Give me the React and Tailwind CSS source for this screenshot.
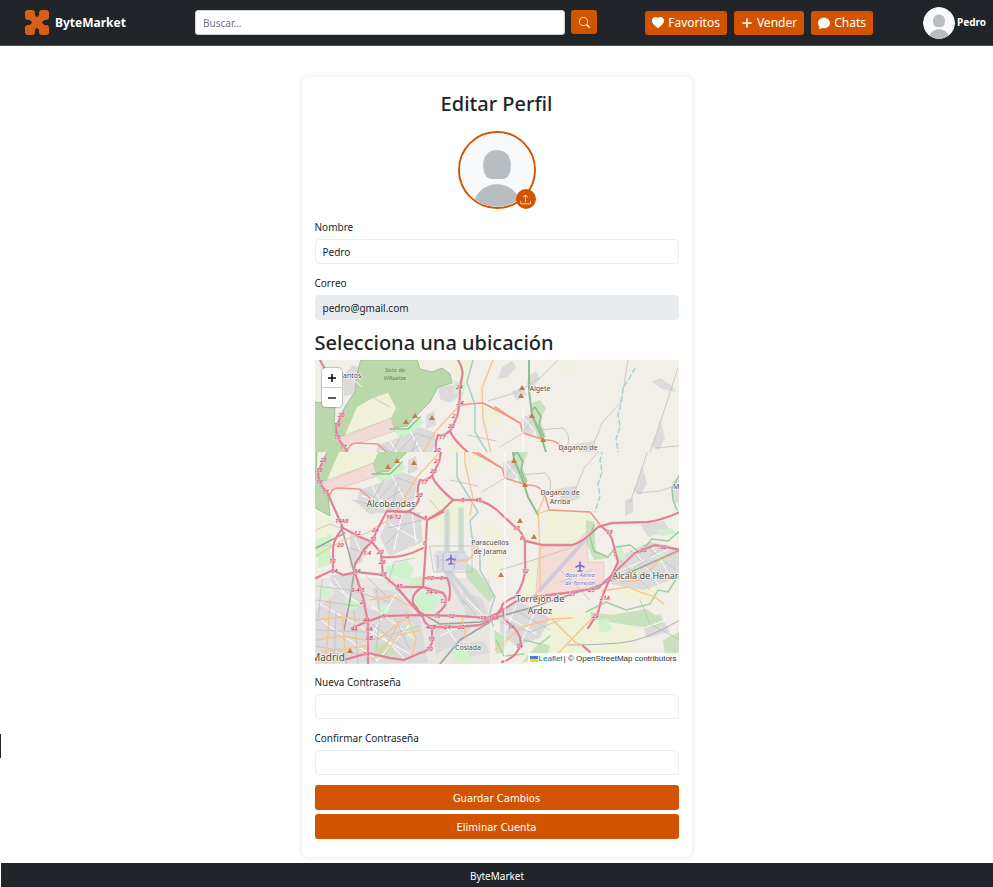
import React from "react";
import { BsChatFill, BsHeartFill, BsPlusLg, BsSearch, BsUpload } from "react-icons/bs";

function Logo() {
  return (
    <svg viewBox="0 0 24 25" className="h-[25px] w-6" aria-hidden="true">
      <g fill="#d95f16">
        <rect width="10" height="10" rx="3" />
        <rect x="14" width="10" height="10" rx="3" />
        <rect y="15" width="10" height="10" rx="3" />
        <rect x="14" y="15" width="10" height="10" rx="3" />
      </g>
      <path d="M5.500 5.500l13 14M18.500 5.500l-13 14" stroke="#d95f16" strokeWidth="7" />
    </svg>
  );
}

function Avatar({ className }) {
  return (
    <svg viewBox="0 0 78 78" className={className} role="img" aria-label="Foto de perfil">
      <defs>
        <clipPath id="face">
          <circle cx="39" cy="39" r="39" />
        </clipPath>
      </defs>
      <g clipPath="url(#face)">
        <rect width="78" height="78" fill="#f8f9fb" />
        <path d="M39 18c8.500 0 14.500 6 14.500 15 0 10.500-3 15.500-9.500 15.500H34c-6.500 0-9.500-5-9.500-15.500 0-9 6-15 14.500-15z" fill="#b8bdc1" />
        <path d="M39 54c10 0 19 5.500 23 15v9H16v-9c4-9.500 13-15 23-15z" fill="#b8bdc1" />
      </g>
    </svg>
  );
}

const urban = [
  "M325 420l10-10 12 5 2 12-10 12-13 2z",
  "M420 432l16-2 4 12-8 6-10-4z",
  "M360 490l22-8 20-10 16 6-4 22-18 12-26 2-14-12z",
  "M408 460l8-4 2 14-10 4z",
  "M503 463l14-6 4 14-8 10-10-4z",
  "M484 412l10-6 4 6-8 10-10 2z",
  "M494 436l12-4 2 8-10 6z",
  "M510 422l8-6 4 8-6 8-7-2z",
  "M634 427l8-4 12 8 4 6-14-3z",
  "M642 465l-3 14-6 12 8 4 6-12z",
  "M556 489l20-3 4 12-16 6z",
  "M625 500l8-2v14l-8 4z",
  "M390 514l30-2 3 30-34 14-9-20z",
  "M350 530l20 12-8 20-12 6z",
  "M316 610l40-34 14 34 50 6 8 47H316z",
  "M330 575l22-1 2 24-16 6z",
  "M372 588l24 4 18 22-34 2z",
  "M432 624l42-2-12 20-26 12z",
  "M462 592l20 6 6 16-22 2z",
  "M500 610l20-8 30 16-10 20-24 8-16-14z",
  "M620 556l30-14 30 6v28l-36 14-34-6z",
  "M640 524l24-3 6 10-22 6z",
  "M642 620l18-6 10 18-24 6z",
  "M460 643l24-2 6 12-26 4z",
  "M672 482l8-4v26l-6-2z",
];

const fields = [
  "M432 484l16 16 18 0-2 30-24 2-12-12z",
  "M430 405h26l-6 26-8-2z",
  "M548 512h36l16 14-16 18-42 0z",
  "M528 560l12-2-4 40-22 10 10-24z",
  "M552 610l50 0 38 6-8 40-60 6-30-24z",
  "M544 618l30 24-8 20-44 2z",
  "M640 560l36 4-20 40-36-4z",
  "M543 411l14-2-2 9-10 2z",
  "M484 522l20 10 0 40-14 6z",
  "M414 540l12-4v20l-12 4z",
  "M466 456l14-6 4 20-14 4z",
  "M318 516l14 2 4 20-20 10z",
  "M398 536l24-8 2 12-22 10z",
];

const woods = [
  "M514 448l8-3 6 8-6 12 6 16-8 2-6-16z",
  "M590 612l22 3 34-6 16 10-4 10-44-6-22-4z",
  "M540 642l10 4-4 14-24 2z",
  "M663 640l16-8v24l-14 2z",
  "M494 630l14 8-4 14-8 2z",
  "M372 644l16-2 10 12-22 4z",
  "M463 560l14 10 18 26-6 6-22-24z",
  "M586 520l8 2 2 30 14 6-16 2-8-18z",
];

const parks = [
  "M386 566l20-6 8 8-4 12-22-4z",
  "M410 578l12-2v9h-12z",
  "M418 594l12-4 10 12-12 12-14-8z",
  "M316 540l16-6-2 18-14 6z",
  "M318 556l12-4 2 12-14 4z",
  "M344 598l12 2 2 8-10 2z",
  "M406 626l8-2 1 12-8 2z",
  "M452 650l14-3 6 14h-18z",
  "M376 476l12-4 14-9 4 5-14 10-10 6z",
  "M656 530l16-2 6 6-18 2z",
  "M598 620l10-2 4 12-12 3z",
  "M612 550l10-3 4 12-10 3z",
  "M436 425l12 4-3 12-10-4z",
  "M630 566l8-2 3 8-8 3z",
  "M656 556l8-2 2 8-8 2z",
  "M380 604l10 2-2 8-9-2z",
  "M318 590l10-3 2 8-11 3z",
];

const motorways = [
  "M440 405Q446 415 444 422L442 433Q442 450 439 462L432 476Q424 482 420 480Q416 490 419 499Q416 508 407 512L387 511L377 530L372 542Q362 550 360 557Q352 566 355 573L363 597L368 623V664",
  "M432 476Q436 486 453 500L477 500Q490 503 500 513L515 527Q523 532 525 542L525 560Q527 580 515 597Q500 603 502 608L505 620Q524 634 520 646T502 662",
  "M453 500L443 510L427 520L425 560L423 587Q411 593 413 603L423 617Q424 624 432 627L432 643Q428 652 420 653L404 660L390 658L368 653L344 660",
  "M387 511L410 512L427 520L443 512",
  "M316 578L333 570L343 575L357 572L383 575L397 587L410 603L423 617",
  "M302 405L310 420M325 457L318 472Q318 484 327 492L335 510L343 528L360 537L372 542L381 553L383 575",
  "M343 528Q332 540 333 553V570",
  "M383 557Q402 559 423 548",
  "M398 587H423L443 593Q452 604 435 615",
  "M425 578H447Q452 588 449 600",
  "M352 628L366 622L383 616L420 615L460 616L487 618L500 612L515 602L532 597L565 593L598 588L615 572L635 553L655 545L680 550",
  "M432 627H460L480 625L500 616",
  "M526 541L542 545H572Q582 543 598 527L612 523L648 522Q662 520 680 512",
  "M602 527Q612 534 613 543L618 562L608 583L602 597L598 613L588 628",
  "M583 646L590 652",
  "M495 618L502 607",
];

const reds = [
  "M439 451Q452 448 465 448L484 458L502 468L505 478L527 485Q540 484 545 495L549 510L590 512L602 527",
  "M329 497Q331 488 339 488L359 489L370 498",
  "M477 452L500 467",
  "M542 597L600 588",
];

const oranges = [
  "M475 405L464 433L465 463L473 498L470 515",
  "M439 453L417 477L405 497L393 517L367 533L343 540L316 556",
  "M538 510L540 550L540 587L534 597",
  "M602 591L628 587L640 592L655 597L664 604",
  "M552 619L575 642L585 647",
  "M495 650L522 627L552 619L572 618",
  "M598 612L568 643L552 660",
  "M545 494L542 503L538 512M548 510L538 514",
  "M316 620L340 617L360 620",
  "M330 600L326 664M342 612L346 664",
  "M316 640L340 636L366 640",
  "M322 652L366 646",
  "M370 600L392 596L410 606",
  "M378 640L400 622L410 616",
  "M385 655L398 635L420 630",
  "M372 660L390 640L400 620",
  "M406 612L416 640L412 654",
  "M462 616L466 640",
  "M450 563L468 560L476 552L472 540",
  "M680 552L660 560L640 580L620 582",
];

const lanes = [
  "M320 604l90 50M318 618l60 42M330 584l30 20M372 606l44 34M376 630l30 30M396 594l-30 50M412 622l-36 40",
  "M440 636l30-14M446 626l14 22M466 598l16 16M506 616l30 18M516 606l-10 24M536 610l-14 30",
  "M622 570l50-22M634 550l24 34M652 546l18 30M644 628l22-8M390 524l28 16M402 514l-8 36M412 512l4 30",
  "M362 496l44 10M372 486l14 24M392 476l14 26M354 536l10 24M334 578l14 20M324 414l20 18M505 462l12 14",
];

const streets = [
  "M316 586L350 590L390 602M316 600L356 606M322 580L318 620M366 576L390 600M376 588L380 612",
  "M316 530L330 524L346 530M352 500L376 506L402 490M360 488L378 500L398 478L414 484M366 512L384 480M390 512L398 484",
  "M372 624L404 648M372 640L420 626M394 616L410 650M380 616L376 650M316 630L366 632M336 612L334 664M354 612L358 664M316 646L366 656",
  "M470 446L500 437L520 424M540 405L520 425M482 492L505 478L516 462M520 475L545 473Q553 480 550 490",
  "M430 500L440 512M450 480L478 486M463 600L480 620M500 622L530 632L560 620M515 610L550 630",
  "M610 405L606 430L602 448L584 468L574 493M660 413L647 453L637 483L630 502M637 493L660 491L674 486",
  "M640 600L650 624L680 640M560 570L590 600M620 560L650 590M630 550L660 580M644 545L676 570M620 578L660 550",
  "M350 440L372 452M500 570L540 558L570 548M592 570L560 582",
  "M430 546h42v26h-38zM436 552h30M440 560h26M388 528l34-8M386 544l20-20M322 546l22-2M350 548l20 6M388 584l6-22 20-4",
];

const roadNumbers = [
  [438, 434, "24"], [439, 450, "24"], [434, 463, "21"], [430, 473, "20"], [421, 484, "17"],
  [416, 497, "20"], [320, 462, "20"], [316, 472, "18"], [316, 484, "18"], [322, 494, "17"],
  [335, 523, "14A8"], [354, 535, "12"], [370, 541, "31"], [377, 554, "20"], [379, 564, "26"],
  [363, 555, "1.4"], [337, 547, "20"], [329, 563, "10"], [331, 573, "84"], [354, 573, "34"],
  [380, 576, "28"], [396, 588, "45"], [351, 592, "3-4-5"], [360, 604, "2"], [363, 622, "44"],
  [366, 631, "6A"], [366, 640, "6B"], [351, 631, "4A"], [363, 656, "14"], [382, 618, "5"],
  [406, 618, "6"], [434, 618, "16"], [448, 618, "12"], [480, 620, "15-16A"], [427, 580, "10"],
  [440, 580, "6"], [426, 594, "74-9"], [440, 603, "12"], [426, 629, "40B"], [444, 629, "24"],
  [458, 629, "20"], [428, 641, "13"], [426, 651, "10"], [386, 519, "16-12"], [424, 520, "5"],
  [372, 532, "24"], [423, 545, "8"], [475, 502, "45"], [461, 502, "5"], [513, 530, "10"],
  [520, 540, "6"], [522, 573, "12"], [569, 596, "21"], [588, 592, "25"], [600, 600, "21A"],
  [592, 618, "29"], [606, 534, "18"], [613, 556, "1"], [640, 552, "30"], [660, 549, "32"],
  [508, 629, "14"], [516, 648, "14"],
];

const peaks = [
  [388, 467], [397, 461], [414, 463], [504, 433], [503, 441], [514, 461], [525, 485],
  [520, 521], [534, 537], [501, 575], [350, 651],
];

function Terrain() {
  return (
    <g id="terrain" strokeLinejoin="round" strokeLinecap="round" fill="none">
      <rect x="290" y="400" width="400" height="270" fill="#f2efe9" stroke="none" />
      <rect x="312" y="578" width="178" height="92" fill="#e9e6e2" />
      {fields.map((d) => <path key={d} d={d} fill="#eff1d8" />)}
      {urban.map((d) => <path key={d} d={d} fill="#dcdada" />)}
      {woods.map((d) => <path key={d} d={d} fill="#c8e1be" />)}
      {parks.map((d) => <path key={d} d={d} fill="#cff2cc" />)}
      <path d="M290 446L317 450L316 476L328 496L330 516L312 506L290 500z" fill="#bad8ac" stroke="#9cc592" />
      <path d="M343 405L399 405L402 414L414 417L424 413L432 419L434 428L420 432L412 447L399 460L389 471L375 473L372 463L324 481L317 480L320 466L328 450L337 437L339 420z" fill="#bad8ac" stroke="#9cc592" />
      <path d="M327 480L339 452L355 443L370 438L378 453L373 463L340 475z" fill="#f1f1d9" />
      <path d="M320 484L332 480L373 463L377 476L344 487L325 491z" fill="#f2dad5" stroke="#e8b8b2" strokeWidth="0.6" />
      <path d="M540 547L574 546L586 532L588 562L604 562L604 580L590 590L536 596z" fill="#f4dcd8" stroke="#efb9b5" strokeWidth="0.6" />
      <path d="M540 590L586 539" stroke="#d3cbdd" strokeWidth="4" />
      <path d="M447 512V552M461 510V552" stroke="#cfe2ca" strokeWidth="6" />
      <path d="M447 512V552M461 510V552" stroke="#d0d2d6" strokeWidth="2" />
      <path d="M434 554l28-4 8 8-6 12-28 2z" fill="#dcdce6" />
      <path d="M450 572L478 606M446 572L464 604" stroke="#d0d5d8" strokeWidth="4" />
      <path d="M438 556v12M443 554v16M456 555l-2 14" stroke="#b5b5ce" />
      {lanes.map((d) => <path key={d} d={d} stroke="#fff" strokeWidth="1" />)}
      <path d="M455 405L449 427L457 450L457 477L469 497L478 512L470 521L472 537L480 552L480 570L495 597L490 612L493 626" stroke="#a7d0c9" strokeWidth="1.500" />
      <path d="M617 413L612 422L605 433L604 445L600 460L602 472L598 484L600 496L595 512" stroke="#9fd0dc" strokeWidth="1.300" strokeDasharray="5 3" />
      <path d="M511 405V435L514 460L522 478L528 497L538 515" stroke="#8fbd90" strokeWidth="2" />
      <path d="M513 456l4-4 6 10-2 8 5 12" stroke="#8fbd90" strokeWidth="1.500" />
      <path d="M680 474l-8 14 1 12 4 10M594 525l-4 12 4 14 14 6 8-10 14-2 10 8 12-14 16 2 12-10" stroke="#9acb9f" strokeWidth="1.500" />
      <path d="M586 612l20-10 20 8 24-6 8-14 10 2 10-16M524 640l16 4 10-8M496 640l8 16 20-2" stroke="#a6d0a2" strokeWidth="1.500" />
      <path d="M372 474l18 0 12-12" stroke="#8dc391" strokeWidth="1.500" />
      {streets.map((d) => <path key={d} d={d} stroke="#c2c0c0" strokeWidth="0.8" />)}
      <path d="M316 548L345 533M341 526Q348 548 354 572L350 600L344 630M396 588L420 612L440 624L480 622L530 608L600 585L640 568L680 550M440 664L460 640L490 622" stroke="#a3a1a1" strokeWidth="1.600" />
      <path d="M568 645Q595 645 620 643T680 620" stroke="#b1afaf" />
      {oranges.map((d) => <path key={d} d={d} stroke="#f8c48d" strokeWidth="1.300" />)}
      {reds.map((d) => <path key={d} d={d} stroke="#f29583" strokeWidth="1.500" />)}
      {motorways.map((d) => <path key={d} d={d} stroke="#e8a0ae" strokeWidth="2.400" />)}
      {motorways.map((d) => <path key={d} d={d} stroke="#df7c92" strokeWidth="1.400" />)}
      <path d="M505 452V664" stroke="#fff" strokeWidth="1" />
      {peaks.map(([x, y]) => (
        <path key={x} d={`M${x} ${y - 3}l3 5h-6z`} fill="#c87a42" />
      ))}
      <path d="M451 555v9M447 560l4-2 4 2M449 564h4M580 562v9M576 567l4-2 4 2M578 571h4" stroke="#7d6fd0" strokeWidth="1.600" />
      <g fill="#c2365a" fontSize="6" fontStyle="italic" stroke="#f3d3d8" strokeWidth="1" paintOrder="stroke">
        {roadNumbers.map(([x, y, label]) => <text key={`${x}-${y}`} x={x} y={y}>{label}</text>)}
      </g>
      <g fill="#4f4f4f" stroke="#f6f4ee" strokeWidth="1.500" paintOrder="stroke" textAnchor="middle" fontSize="7">
        <g fill="#5c7d5a" stroke="none" fontSize="6" fontStyle="italic">
          <text x="377" y="417">Soto de</text>
          <text x="377" y="425">Viñuelas</text>
        </g>
        <text x="332" y="423">Cantos</text>
        <text x="522" y="436">Algete</text>
        <text x="560" y="495">Daganzo de</text>
        <text x="560" y="504">Arriba</text>
        <text x="490" y="545">Paracuellos</text>
        <text x="490" y="554">de Jarama</text>
        <text x="468" y="650">Coslada</text>
        <g fontSize="9">
          <text x="391" y="507">Alcobendas</text>
          <text x="540" y="602">Torrejón de</text>
          <text x="540" y="614">Ardoz</text>
          <text x="650" y="579">Alcalá de Henares</text>
        </g>
        <text x="328" y="661" fontSize="10">Madrid</text>
        <text x="682" y="489">Meco</text>
        <g fill="#7a6fc4" fontSize="6" fontStyle="italic">
          <text x="580" y="577">Base Aérea</text>
          <text x="580" y="585">de Torrejón</text>
        </g>
      </g>
    </g>
  );
}

function LocationMap() {
  return (
    <div className="relative h-[304px] overflow-hidden bg-[#f2efe9]">
      <svg
        viewBox="315 360 364 304"
        preserveAspectRatio="xMidYMid slice"
        className="block h-full w-full font-['Noto_Sans',sans-serif]"
        role="img"
        aria-label="Mapa"
      >
        <defs>
          <clipPath id="upper"><rect x="315" y="360" width="364" height="92" /></clipPath>
          <clipPath id="lower"><rect x="315" y="452" width="364" height="212" /></clipPath>
        </defs>
        <g clipPath="url(#lower)"><Terrain /></g>
        <g clipPath="url(#upper)"><use href="#terrain" x="18" y="-45" /></g>
      </svg>
      <div className="absolute left-[7px] top-2 flex w-5 flex-col rounded-sm bg-white text-black shadow-[0_0_1px_1px_rgba(0,0,0,0.2)]">
        <button type="button" aria-label="Acercar" className="flex h-5 items-center justify-center border-b border-[#ccc]">
          <svg viewBox="0 0 8 8" className="size-2 stroke-black" aria-hidden="true"><path d="M4 0v8M0 4h8" strokeWidth="1.500" /></svg>
        </button>
        <button type="button" aria-label="Alejar" className="flex h-[19px] items-center justify-center">
          <svg viewBox="0 0 8 8" className="size-2 stroke-black" aria-hidden="true"><path d="M0 4h8" strokeWidth="1.300" /></svg>
        </button>
      </div>
      <div className="absolute bottom-0 right-0 flex items-center gap-px whitespace-nowrap bg-white/80 px-0.5 font-['Liberation_Sans',sans-serif] text-[8px] leading-[11px] text-[#333]">
        <svg viewBox="0 0 8 6" className="h-1.5 w-2" aria-hidden="true">
          <path d="M0 0h8v3H0z" fill="#4c7be1" />
          <path d="M0 3h8v3H0z" fill="#ffd500" />
        </svg>
        <a href="#leaflet" className="text-[#0078a8]">Leaflet</a>
        <span>| © OpenStreetMap contributors</span>
      </div>
    </div>
  );
}

function Field({ id, label, ...props }) {
  return (
    <div>
      <label htmlFor={id} className="mb-1 block leading-[15px]">{label}</label>
      <input
        id={id}
        className="block h-[25px] w-full rounded border border-[#eceeef] bg-white px-[7px] outline-none disabled:border-[#e9ecef] disabled:bg-[#e9ecef]"
        {...props}
      />
    </div>
  );
}

const navButton = "flex h-6 items-center gap-1 whitespace-nowrap rounded-[3px] bg-[#d35400] px-[7px] text-xs text-white";
const wideButton = "block h-[25px] w-full rounded-[3px] bg-[#d35400] pt-0.5 font-['DejaVu_Sans',sans-serif] text-[10px] text-white";

export default function App() {
  return (
    <div className="relative flex min-h-screen flex-col bg-white font-['Noto_Sans',sans-serif] text-[10px] text-[#212529]">
      <header className="flex h-[46px] items-center border-b border-[#4d5154] bg-[#212529] pl-[25px] pr-[7px] text-white">
        <a href="#inicio" className="flex w-[170px] items-center gap-1.5 text-xs font-bold">
          <Logo />
          ByteMarket
        </a>
        <form className="flex flex-1 gap-1.5">
          <input
            type="search"
            aria-label="Buscar"
            placeholder="Buscar..."
            className="h-[25px] min-w-0 flex-1 rounded-[3px] border border-[#ced4da] bg-white px-[7px] text-[#212529] outline-none placeholder:text-[#6c757d]"
          />
          <button type="submit" aria-label="Buscar" className="flex h-6 w-[26px] items-center justify-center rounded-[3px] bg-[#d35400]">
            <BsSearch className="size-[11px]" />
          </button>
        </form>
        <nav className="ml-12 flex gap-[7px]">
          <button type="button" className={navButton}><BsHeartFill className="size-3" />Favoritos</button>
          <button type="button" className={navButton}><BsPlusLg className="size-3 stroke-current stroke-1" />Vender</button>
          <button type="button" className={navButton}><BsChatFill className="size-3" />Chats</button>
        </nav>
        <a href="#perfil" className="ml-[50px] flex items-center gap-0.5 font-bold">
          <Avatar className="size-8 rounded-full" />
          Pedro
        </a>
      </header>

      <div className="absolute left-0 top-[734px] h-6 w-px bg-[#212529]" />

      <main className="flex-1 px-4 pb-1.5 pt-[31px]">
        <form className="mx-auto w-full max-w-[390px] rounded-md bg-white px-[13px] pb-[18px] pt-3 shadow-[0_0_5px_1px_rgba(0,0,0,0.08)]">
          <h1 className="mb-3 text-center text-xl font-medium leading-[30px]">Editar Perfil</h1>
          <div className="relative mx-auto mb-[11px] size-[78px]">
            <Avatar className="size-[78px] rounded-full border-2 border-[#d35400]" />
            <label htmlFor="foto" className="absolute bottom-0 right-0 flex size-5 cursor-pointer items-center justify-center rounded-full bg-[#d35400] text-white">
              <BsUpload className="size-[11px]" aria-label="Subir foto" />
            </label>
            <input id="foto" type="file" className="sr-only" />
          </div>
          <div className="flex flex-col gap-3">
            <Field id="nombre" label="Nombre" type="text" defaultValue="Pedro" />
            <Field id="correo" label="Correo" type="email" defaultValue="pedro@gmail.com" disabled />
          </div>
          <h2 className="mb-1 mt-[10px] text-xl font-medium leading-[26px]">Selecciona una ubicación</h2>
          <LocationMap />
          <div className="mt-[11px] flex flex-col gap-3">
            <Field id="nueva" label="Nueva Contraseña" type="password" />
            <Field id="confirmar" label="Confirmar Contraseña" type="password" />
          </div>
          <div className="mt-[10px] flex flex-col gap-1">
            <button type="submit" className={wideButton}>Guardar Cambios</button>
            <button type="button" className={wideButton}>Eliminar Cuenta</button>
          </div>
        </form>
      </main>

      <footer className="ml-px flex h-6 items-center justify-center bg-[#212529] pt-0.5 text-white">ByteMarket</footer>
    </div>
  );
}
